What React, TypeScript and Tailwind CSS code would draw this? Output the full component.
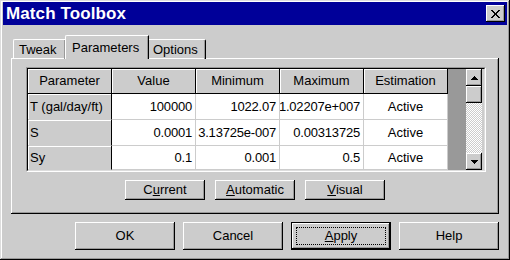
import React from 'react';

const font = { fontFamily: '"Liberation Sans", Arial, sans-serif' };

const raised = 'shadow-[inset_-1px_-1px_0_#000,inset_1px_1px_0_#fff,inset_-2px_-2px_0_#999999]';

const cols = ['Parameter', 'Value', 'Minimum', 'Maximum', 'Estimation'];
const rows = [
  ['T (gal/day/ft)', '100000', '1022.07', '1.02207e+007', 'Active'],
  ['S', '0.0001', '3.13725e-007', '0.00313725', 'Active'],
  ['Sy', '0.1', '0.001', '0.5', 'Active'],
];
const rowHeights = ['h-[26px]', 'h-[26px]', 'h-[24px]'];

function Arrow({ down }: { down?: boolean }) {
  return (
    <svg width="7" height="4" viewBox="0 0 7 4" shapeRendering="crispEdges">
      <path d={down ? 'M0 0h7v1H0zM1 1h5v1H1zM2 2h3v1H2zM3 3h1v1H3z' : 'M3 0h1v1H3zM2 1h3v1H2zM1 2h5v1H1zM0 3h7v1H0z'} fill="#000" />
    </svg>
  );
}

function PanelButton({ children }: { children: React.ReactNode }) {
  return (
    <div className={`w-[80px] h-[20px] flex items-center justify-center bg-[#cccccc] text-[13px] text-black ${raised}`}>
      {children}
    </div>
  );
}

function DialogButton({ children, isDefault }: { children: React.ReactNode; isDefault?: boolean }) {
  if (isDefault) {
    return (
      <div className="w-[100px] h-[28px] border border-black flex">
        <div className={`flex-1 p-[4px] bg-[#cccccc] ${raised}`}>
          <div className="h-full border border-dotted border-black flex items-center justify-center text-[13px] text-black">
            {children}
          </div>
        </div>
      </div>
    );
  }
  return (
    <div className={`w-[100px] h-[28px] flex items-center justify-center bg-[#cccccc] text-[13px] text-black ${raised}`}>
      {children}
    </div>
  );
}

export default function App() {
  return (
    <div className="w-[510px] h-[260px] bg-[#cccccc] select-none" style={font}>
      <div className="w-full h-full pt-[2px] px-[3px] flex flex-col shadow-[inset_-1px_-1px_0_#000,inset_1px_1px_0_#dddddd,inset_-2px_-2px_0_#999999,inset_2px_2px_0_#fff]">
        {/* title bar */}
        <div className="h-[23px] bg-[#000099] flex items-center justify-between pl-[3px] pr-[2px]">
          <span className="text-white font-bold text-[17px] leading-none tracking-[0.1px]">Match Toolbox</span>
          <div className={`w-[19px] h-[17px] bg-[#cccccc] flex items-center justify-center ${raised}`}>
            <svg width="9" height="8" viewBox="0 0 9 8" shapeRendering="crispEdges">
              <path d="M0 0h2v1H0zM7 0h2v1H7zM1 1h2v1H1zM6 1h2v1H6zM2 2h2v1H2zM5 2h2v1H5zM3 3h3v1H3zM3 4h3v1H3zM2 5h2v1H2zM5 5h2v1H5zM1 6h2v1H1zM6 6h2v1H6zM0 7h2v1H0zM7 7h2v1H7z" fill="#000" />
            </svg>
          </div>
        </div>

        <div className="pl-[8px] pt-[9px]">
          {/* tabs */}
          <div className="flex items-end pl-[2px] h-[24px]">
            <div className="w-[53px] h-[20px] -mb-px border-l border-t border-white rounded-tl-[2px] shadow-[inset_-1px_0_0_#999999] border-r border-r-black flex items-center pl-[5px] text-[13px] text-black">
              Tweak
            </div>
            <div className="relative z-10 w-[84px] h-[24px] -mb-px -ml-[1px] bg-[#cccccc] border-l border-t border-white rounded-tl-[2px] border-r border-r-black shadow-[inset_-1px_0_0_#999999] flex items-start pt-[2px] pl-[6px] text-[13px] text-black">
              Parameters
            </div>
            <div className="w-[57px] h-[20px] -mb-px border-t border-white rounded-tr-[2px] border-r border-r-black shadow-[inset_-1px_0_0_#999999] flex items-center pl-[4px] text-[13px] text-black">
              Options
            </div>
          </div>

          {/* panel */}
          <div className="w-[488px] h-[156px] pt-[9px] pl-[15px] flex flex-col shadow-[inset_-1px_-1px_0_#000,inset_1px_1px_0_#fff,inset_-2px_-2px_0_#999999]">
            {/* grid frame */}
            <div className="w-[460px] h-[105px] border border-t-[#999999] border-l-[#999999] border-b-white border-r-white">
              <div className="w-full h-full border border-t-black border-l-black border-b-[#dddddd] border-r-[#dddddd] flex">
                <div className="w-[420px] flex flex-col text-[13px] text-black">
                  <div className="flex h-[25px]">
                    {cols.map((c) => (
                      <div key={c} className="w-[84px] bg-[#cccccc] border-r border-b border-black shadow-[inset_1px_1px_0_#fff] flex items-center justify-center">
                        {c}
                      </div>
                    ))}
                  </div>
                  {rows.map((r, i) => (
                    <div key={r[0]} className={`flex ${rowHeights[i]}`}>
                      <div className="w-[84px] bg-[#cccccc] border-r border-b border-r-black border-b-[#cccccc] shadow-[inset_1px_1px_0_#fff] flex items-center pl-[2px] overflow-hidden whitespace-nowrap">
                        {r[0]}
                      </div>
                      {r.slice(1, 4).map((v, j) => (
                        <div key={j} className="w-[84px] bg-white border-r border-b border-[#cccccc] flex items-center justify-end pr-[3px] overflow-hidden whitespace-nowrap tracking-[-0.2px]">
                          {v}
                        </div>
                      ))}
                      <div className="w-[84px] bg-white border-r border-b border-[#cccccc] flex items-center justify-center">
                        {r[4]}
                      </div>
                    </div>
                  ))}
                </div>
                <div className="w-[18px] bg-[#999999]" />
                {/* scrollbar */}
                <div className="w-[16px] flex flex-col">
                  <div className={`h-[17px] bg-[#cccccc] flex items-center justify-center ${raised}`}>
                    <Arrow />
                  </div>
                  <div className={`h-[17px] bg-[#cccccc] ${raised}`} />
                  <div className="flex-1 bg-[repeating-conic-gradient(#fff_0%_25%,#cccccc_0%_50%)] bg-[length:2px_2px]" />
                  <div className={`h-[17px] bg-[#cccccc] flex items-center justify-center ${raised}`}>
                    <Arrow down />
                  </div>
                </div>
              </div>
            </div>

            <div className="flex justify-center gap-[10px] mt-[8px] -ml-[15px]">
              <PanelButton>C<span className="underline">u</span>rrent</PanelButton>
              <PanelButton><span className="underline">A</span>utomatic</PanelButton>
              <PanelButton><span className="underline">V</span>isual</PanelButton>
            </div>
          </div>

          {/* dialog buttons */}
          <div className="w-[488px] flex justify-end gap-[8px] mt-[8px]">
            <DialogButton>OK</DialogButton>
            <DialogButton>Cancel</DialogButton>
            <DialogButton isDefault><span><span className="underline">A</span>pply</span></DialogButton>
            <DialogButton>Help</DialogButton>
          </div>
        </div>
      </div>
    </div>
  );
}
